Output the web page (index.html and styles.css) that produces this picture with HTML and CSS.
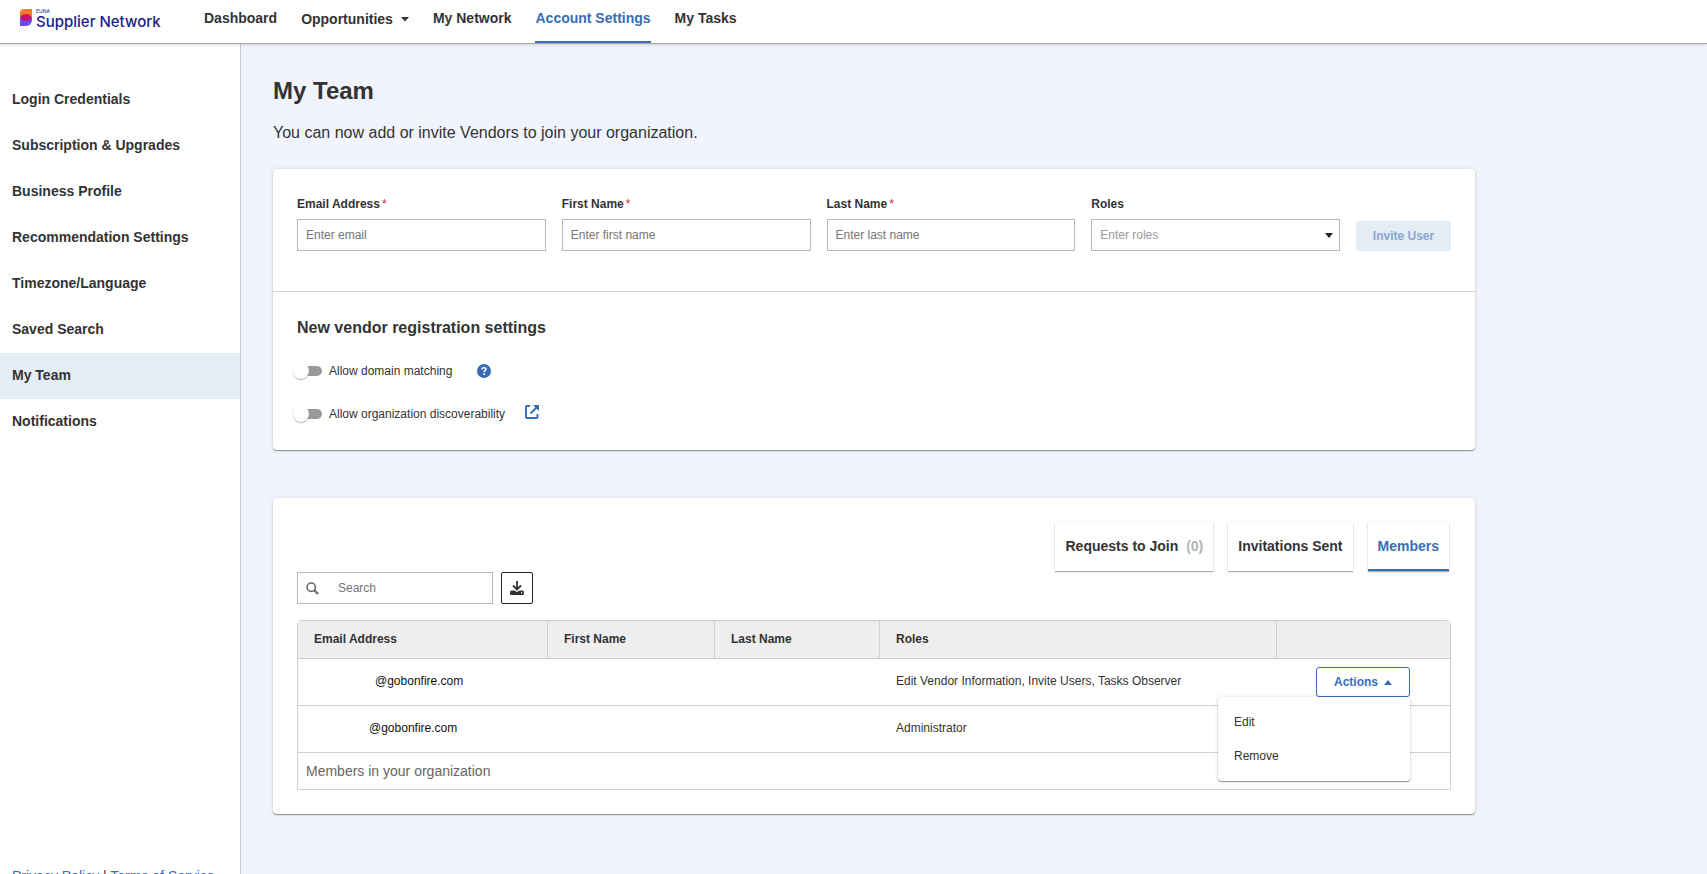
FILE: index.html
```html
<!DOCTYPE html>
<html lang="en">
<head>
    <meta charset="UTF-8">
    <meta name="viewport" content="width=device-width, initial-scale=1.0">
    <title>My Team</title>
    <link rel="stylesheet" href="styles.css">
</head>
<body>
    <header class="topbar">
        <a class="logo" href="#">
            <svg class="logo-mark" width="12" height="17" viewBox="0 0 12 17">
                <path d="M4 0h8v8.500H0V4a4 4 0 0 1 4-4z" fill="#f97a2b"/>
                <path d="M0 8.500h12V11a6 6 0 0 1-6 6H0z" fill="#6f4af2"/>
                <ellipse cx="6" cy="8.500" rx="5.500" ry="3.500" fill="#c8146e"/>
            </svg>
            <span class="logo-text">
                <span class="logo-brand">EUNA</span>
                <span class="logo-name">Supplier Network</span>
            </span>
        </a>
        <nav class="main-nav">
            <a href="#">Dashboard</a>
            <a href="#" class="has-menu">Opportunities
                <svg width="8" height="5" viewBox="0 0 8 5"><path d="M0 0h8L4 4.500z" fill="currentColor"/></svg>
            </a>
            <a href="#">My Network</a>
            <a href="#" class="active">Account Settings</a>
            <a href="#">My Tasks</a>
        </nav>
    </header>

    <div class="layout">
        <aside class="sidebar">
            <nav class="side-nav">
                <a href="#">Login Credentials</a>
                <a href="#">Subscription &amp; Upgrades</a>
                <a href="#">Business Profile</a>
                <a href="#">Recommendation Settings</a>
                <a href="#">Timezone/Language</a>
                <a href="#">Saved Search</a>
                <a href="#" class="active">My Team</a>
                <a href="#">Notifications</a>
            </nav>
            <div class="side-footer">
                <a href="#">Privacy Policy</a> | <a href="#">Terms of Service</a>
            </div>
        </aside>

        <main class="content">
            <h1>My Team</h1>
            <p class="intro">You can now add or invite Vendors to join your organization.</p>

            <section class="card">
                <form class="invite-form">
                    <div class="field">
                        <label for="email">Email Address<span class="required">*</span></label>
                        <input type="text" id="email" placeholder="Enter email">
                    </div>
                    <div class="field">
                        <label for="firstName">First Name<span class="required">*</span></label>
                        <input type="text" id="firstName" placeholder="Enter first name">
                    </div>
                    <div class="field">
                        <label for="lastName">Last Name<span class="required">*</span></label>
                        <input type="text" id="lastName" placeholder="Enter last name">
                    </div>
                    <div class="field">
                        <label for="roles">Roles</label>
                        <div class="select-wrap">
                            <select id="roles">
                                <option value="">Enter roles</option>
                            </select>
                            <svg width="8" height="5" viewBox="0 0 8 5"><path d="M0 0h8L4 5z" fill="#222"/></svg>
                        </div>
                    </div>
                    <button type="submit" class="btn-invite" disabled>Invite User</button>
                </form>

                <div class="settings">
                    <h2>New vendor registration settings</h2>
                    <div class="setting">
                        <input type="checkbox" class="toggle" id="domainMatching">
                        <label for="domainMatching">Allow domain matching</label>
                        <svg class="help-icon" width="14" height="14" viewBox="0 0 14 14">
                            <circle cx="7" cy="7" r="7" fill="#3a6cb5"/>
                            <path d="M5 5.600C5 4.300 5.900 3.700 7 3.700S9 4.300 9 5.300C9 6.600 7.100 6.600 7.100 8" fill="none" stroke="#fff" stroke-width="1.500"/>
                            <circle cx="7.100" cy="10" r="1" fill="#fff"/>
                        </svg>
                    </div>
                    <div class="setting">
                        <input type="checkbox" class="toggle" id="discoverability">
                        <label for="discoverability">Allow organization discoverability</label>
                        <a href="#" class="open-link" aria-label="Open">
                            <svg width="14" height="14" viewBox="0 0 14 14">
                                <path d="M5 1H2Q1 1 1 2v10q0 1 1 1h9.500q1 0 1-1V9" fill="none" stroke="#3a6cb5" stroke-width="1.900"/>
                                <path d="M5.500 8.500 12 2" fill="none" stroke="#3a6cb5" stroke-width="1.900"/>
                                <path d="M8 0h6v6z" fill="#3a6cb5"/>
                            </svg>
                        </a>
                    </div>
                </div>
            </section>

            <section class="card members">
                <div class="tabs">
                    <button type="button" class="tab">Requests to Join <span class="count">(0)</span></button>
                    <button type="button" class="tab">Invitations Sent</button>
                    <button type="button" class="tab active">Members</button>
                </div>

                <div class="toolbar">
                    <div class="search">
                        <svg width="13" height="13" viewBox="0 0 13 13">
                            <circle cx="5.200" cy="5.200" r="4.200" fill="none" stroke="#666" stroke-width="1.600"/>
                            <path d="M8.300 8.300 12 12" stroke="#666" stroke-width="2"/>
                        </svg>
                        <input type="text" placeholder="Search" aria-label="Search">
                    </div>
                    <button type="button" class="btn-download" aria-label="Download">
                        <svg width="14" height="14" viewBox="0 0 14 14">
                            <path d="M7 0v8M3 4.500 7 8.500l4-4" fill="none" stroke="#333" stroke-width="1.800"/>
                            <path d="M1.500 9.500h3L7 11l2.500-1.500h3Q14 9.500 14 11v1.500Q14 14 12.500 14h-11Q0 14 0 12.500V11Q0 9.500 1.500 9.500z" fill="#333"/>
                            <circle cx="11.700" cy="11.800" r=".7" fill="#fff"/>
                        </svg>
                    </button>
                </div>

                <div class="table-wrap">
                    <table>
                        <colgroup>
                            <col class="col-email">
                            <col class="col-first">
                            <col class="col-last">
                            <col class="col-roles">
                            <col class="col-actions">
                        </colgroup>
                        <thead>
                            <tr>
                                <th>Email Address</th>
                                <th>First Name</th>
                                <th>Last Name</th>
                                <th>Roles</th>
                                <th></th>
                            </tr>
                        </thead>
                        <tbody>
                            <tr>
                                <td class="email first-user">@gobonfire.com</td>
                                <td></td>
                                <td></td>
                                <td>Edit Vendor Information, Invite Users, Tasks Observer</td>
                                <td class="actions-cell">
                                    <div class="dropdown">
                                        <button type="button" class="btn-actions">Actions
                                            <svg width="8" height="5" viewBox="0 0 8 5"><path d="M0 5h8L4 0z" fill="currentColor"/></svg>
                                        </button>
                                        <div class="dropdown-menu">
                                            <button type="button">Edit</button>
                                            <button type="button">Remove</button>
                                        </div>
                                    </div>
                                </td>
                            </tr>
                            <tr>
                                <td class="email second-user">@gobonfire.com</td>
                                <td></td>
                                <td></td>
                                <td>Administrator</td>
                                <td></td>
                            </tr>
                        </tbody>
                        <tfoot>
                            <tr>
                                <td colspan="5">Members in your organization</td>
                            </tr>
                        </tfoot>
                    </table>
                </div>
            </section>
        </main>
    </div>
</body>
</html>
```
FILE: styles.css
```css
* {
    box-sizing: border-box;
}

body {
    margin: 0;
    height: 100vh;
    overflow: hidden;
    font-family: "Liberation Sans", Arial, sans-serif;
    font-size: 12px;
    color: #333;
    background: #f1f4fd;
}

a {
    color: inherit;
    text-decoration: none;
}

button, input, select {
    font-family: inherit;
    font-size: 12px;
    color: #333;
}

svg {
    display: block;
    flex: none;
}

/* top bar */
.topbar {
    position: relative;
    display: flex;
    height: 44px;
    background: #fff;
    border-bottom: 1px solid #a6a8a4;
    box-shadow: 0 1px 3px rgba(0, 0, 0, 0.15);
}

.logo {
    display: flex;
    gap: 4px;
    width: 204px;
    padding: 9px 0 0 20px;
    color: #1b1b8a;
}

.logo-text {
    display: flex;
    flex-direction: column;
    font-family: Inter, sans-serif;
}

.logo-brand {
    font-size: 5px;
    line-height: 5px;
}

.logo-name {
    font-size: 15px;
    line-height: 15px;
    font-weight: 500;
    white-space: nowrap;
}

.main-nav {
    display: flex;
    gap: 24px;
    font-size: 14px;
    font-weight: bold;
}

.main-nav a {
    padding-top: 10px;
    line-height: 16px;
    white-space: nowrap;
}

.main-nav .has-menu {
    display: flex;
    align-items: center;
    gap: 8px;
    height: 28px;
}

.main-nav .active {
    color: #3a6cb5;
    border-bottom: 2px solid #3a6cb5;
}

/* sidebar */
.layout {
    display: flex;
    height: 100vh;
}

.sidebar {
    display: flex;
    flex-direction: column;
    flex: none;
    width: 241px;
    padding: 33px 0;
    background: #fff;
    border-right: 1px solid #ccc;
    font-size: 14px;
}

.side-nav a {
    display: block;
    padding: 0 12px 2px;
    line-height: 44px;
    font-weight: bold;
}

.side-nav .active {
    background: #e4ecf4;
}

.side-footer {
    margin-top: auto;
    padding: 0 12px;
    line-height: 18px;
}

.side-footer a {
    color: #3a6cb5;
}

/* content */
.content {
    flex: 1;
    padding: 32px;
}

h1 {
    margin: 0 0 15px;
    font-size: 24px;
    line-height: 30px;
}

.intro {
    margin: 0 0 24px;
    font-size: 16px;
    line-height: 24px;
}

.card {
    max-width: 1202px;
    margin-bottom: 48px;
    background: #fff;
    border-radius: 4px;
    box-shadow: 0 1px 1px rgba(0, 0, 0, 0.4), 0 0 4px rgba(0, 0, 0, 0.12);
}

.invite-form {
    display: grid;
    grid-template-columns: repeat(4, 1fr) 95px;
    gap: 16px;
    align-items: end;
    padding: 25px 24px 40px;
    border-bottom: 1px solid #d4d4d4;
}

.field label {
    display: block;
    margin-bottom: 5px;
    line-height: 20px;
    font-weight: bold;
}

.required {
    margin-left: 2px;
    color: #c8283c;
    font-weight: normal;
}

.field input, .field select {
    display: block;
    width: 100%;
    height: 32px;
    padding: 0 8px;
    background: #fff;
    border: 1px solid #b8b8b8;
    border-radius: 0;
    appearance: none;
}

.field input::placeholder, .search input::placeholder {
    color: #757575;
}

.field select {
    color: #9a9a9a;
}

.select-wrap {
    position: relative;
}

.select-wrap svg {
    position: absolute;
    top: 14px;
    right: 7px;
}

.btn-invite {
    height: 30px;
    padding: 0;
    background: #e4ecf4;
    border: none;
    border-radius: 3px;
    color: #88a6d2;
    font-weight: bold;
}

.settings {
    padding: 25px 24px 15px;
}

h2 {
    margin: 0 0 10px;
    font-size: 16px;
    line-height: 22px;
}

.setting {
    display: flex;
    align-items: center;
    height: 43px;
}

.toggle {
    position: relative;
    width: 25px;
    height: 10px;
    margin: 0 7px 0 0;
    background: #999;
    border-radius: 5px;
    appearance: none;
}

.toggle::before {
    content: "";
    position: absolute;
    top: -3px;
    left: -4px;
    width: 16px;
    height: 16px;
    background: #fff;
    border-radius: 50%;
    box-shadow: 0 1px 1px rgba(0, 0, 0, 0.3);
}

.help-icon {
    margin-left: 25px;
}

.open-link {
    margin: 0 0 4px 20px;
}

/* members */
.members {
    padding: 24px;
}

.tabs {
    display: flex;
    justify-content: flex-end;
    gap: 15px;
    padding-right: 2px;
}

.tab {
    height: 49px;
    padding: 0 10px;
    background: #fff;
    border: none;
    border-bottom: 2px solid transparent;
    box-shadow: 0 1px 1px rgba(0, 0, 0, 0.3), 0 0 2px rgba(0, 0, 0, 0.12);
    font-size: 14px;
    font-weight: bold;
}

.tab.active {
    color: #3a6cb5;
    border-bottom-color: #3a6cb5;
}

.count {
    margin-left: 4px;
    color: #b4b4b4;
}

.toolbar {
    display: flex;
    gap: 8px;
    margin: 1px 0 16px;
}

.search {
    display: flex;
    align-items: center;
    gap: 19px;
    width: 196px;
    height: 32px;
    padding: 0 8px;
    border: 1px solid #b8b8b8;
}

.search input {
    flex: 1;
    min-width: 0;
    padding: 0;
    border: none;
}

.btn-download {
    display: flex;
    align-items: center;
    justify-content: center;
    width: 32px;
    height: 32px;
    padding: 0;
    background: #fff;
    border: 1px solid #222;
    border-radius: 2px;
}

.table-wrap {
    border: 1px solid #d0d0d0;
    border-radius: 4px 4px 0 0;
}

table {
    width: 100%;
    table-layout: fixed;
    border-collapse: separate;
    border-spacing: 0;
}

.col-email {
    width: 250px;
}

.col-first {
    width: 167px;
}

.col-last {
    width: 165px;
}

.col-actions {
    width: 173px;
}

th, td {
    padding: 0 16px 2px;
    text-align: left;
    border-bottom: 1px solid #d0d0d0;
}

th {
    height: 38px;
    background: #eee;
    border-right: 1px solid #d0d0d0;
}

th:last-child {
    border-right: none;
}

td {
    height: 47px;
}

tfoot td {
    height: 36px;
    padding: 0 8px;
    border-bottom: none;
    color: #666;
    font-size: 14px;
}

.email {
    color: #111;
}

.first-user {
    padding-left: 77px;
}

.second-user {
    padding-left: 71px;
}

.actions-cell {
    padding: 0 40px 0 0;
}

.dropdown {
    position: relative;
    display: flex;
    justify-content: flex-end;
}

.btn-actions {
    display: flex;
    align-items: center;
    gap: 6px;
    height: 30px;
    padding: 0 17px;
    background: #fff;
    border: 1px solid #3a6cb5;
    border-radius: 3px;
    color: #3a6cb5;
    font-weight: bold;
}

.dropdown-menu {
    position: absolute;
    top: 100%;
    right: 0;
    z-index: 1;
    width: 192px;
    padding: 8px 0;
    background: #fff;
    border-radius: 4px;
    box-shadow: 0 1px 1px rgba(0, 0, 0, 0.4), 0 0 4px rgba(0, 0, 0, 0.15);
}

.dropdown-menu button {
    display: block;
    width: 100%;
    height: 34px;
    padding: 0 16px;
    background: none;
    border: none;
    text-align: left;
}
```
